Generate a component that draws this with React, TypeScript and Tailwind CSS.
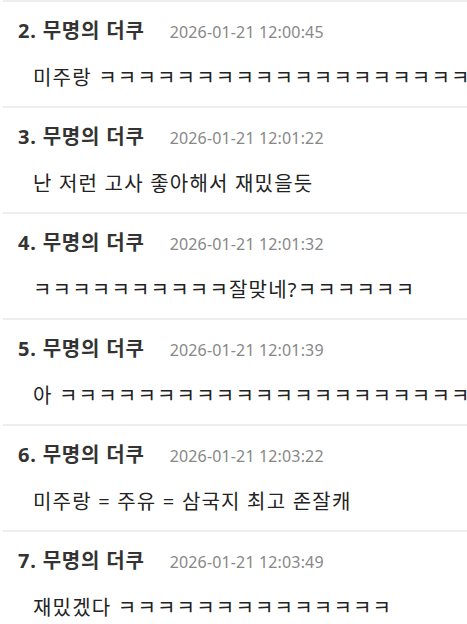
import React from "react";

const items = [
  { n: 2, time: "2026-01-21 12:00:45", text: "미주랑 ㅋㅋㅋㅋㅋㅋㅋㅋㅋㅋㅋㅋㅋㅋㅋㅋㅋㅋㅋㅋㅋㅋㅋ" },
  { n: 3, time: "2026-01-21 12:01:22", text: "난 저런 고사 좋아해서 재밌을듯" },
  { n: 4, time: "2026-01-21 12:01:32", text: "ㅋㅋㅋㅋㅋㅋㅋㅋㅋㅋ잘맞네?ㅋㅋㅋㅋㅋㅋ" },
  { n: 5, time: "2026-01-21 12:01:39", text: "아 ㅋㅋㅋㅋㅋㅋㅋㅋㅋㅋㅋㅋㅋㅋㅋㅋㅋㅋㅋㅋㅋㅋㅋㅋ" },
  { n: 6, time: "2026-01-21 12:03:22", text: "미주랑 = 주유 = 삼국지 최고 존잘캐" },
  { n: 7, time: "2026-01-21 12:03:49", text: "재밌겠다 ㅋㅋㅋㅋㅋㅋㅋㅋㅋㅋㅋㅋㅋㅋ" },
];

export default function App() {
  return (
    <div
      className="w-[467px] h-[624px] overflow-hidden bg-white"
      style={{ fontFamily: '"Noto Sans", "Noto Sans CJK KR", sans-serif' }}
    >
      <div className="ml-[3px] border-t-2 border-[#eeeeee]">
        {items.map((it) => (
          <div key={it.n} className="h-[106px] border-b-2 border-[#eeeeee] pt-[15px] pl-[15px] overflow-hidden">
            <div className="flex items-baseline whitespace-nowrap">
              <span className="text-[20px] leading-[27px] tracking-[0.8px] font-bold text-[#333333]">
                {it.n}. 무명의 더쿠
              </span>
              <span className="ml-[25px] text-[16px] tracking-[0.15px] text-[#888888]">{it.time}</span>
            </div>
            <div className="mt-[20px] pl-[15px] text-[20px] leading-[27px] tracking-[1.2px] text-[#222222] whitespace-nowrap">
              {it.text}
            </div>
          </div>
        ))}
      </div>
    </div>
  );
}
